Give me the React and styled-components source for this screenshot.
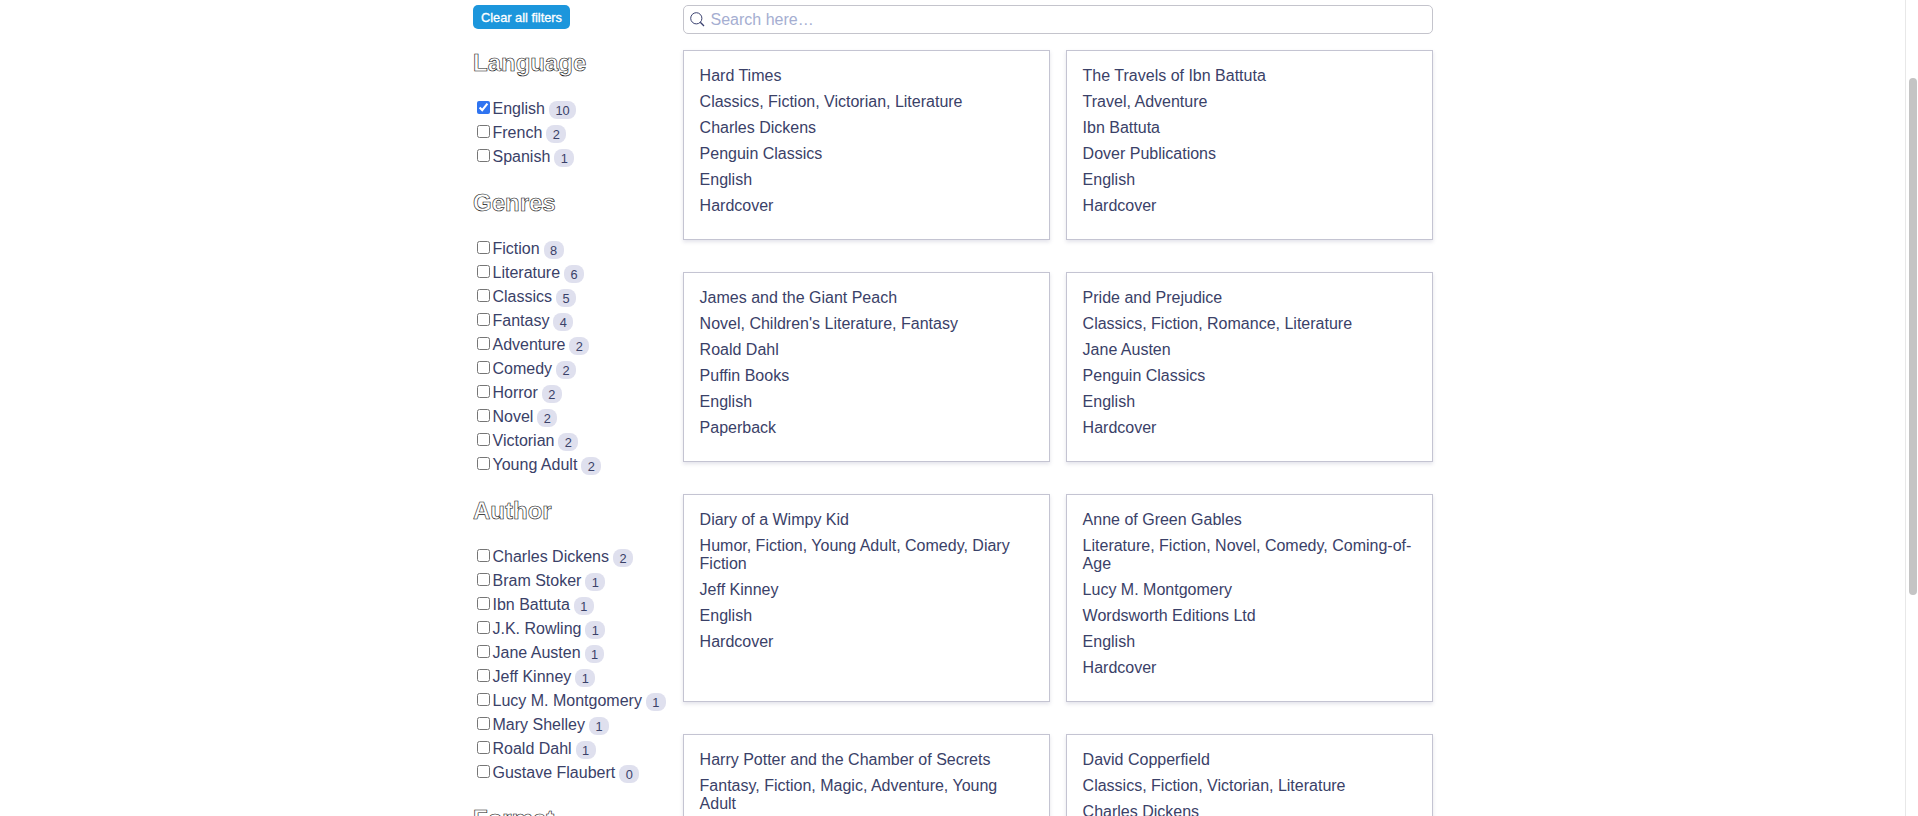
import React from "react";
import styled, { createGlobalStyle } from "styled-components";

const Global = createGlobalStyle`
  *, *::before, *::after { box-sizing: border-box; }
  body {
    margin: 0;
    height: 816px;
    overflow: hidden;
    background: #fff;
    color: #3a4168;
    font-family: "Liberation Sans", Arial, sans-serif;
    font-size: 16px;
    line-height: 18px;
  }
`;

const Page = styled.div`
  display: flex;
  height: 816px;
  overflow: hidden;
`;

const Content = styled.main`
  flex: 1;
  min-width: 0;
  display: flex;
  align-items: flex-start;
  padding: 5px 0 0 473px;
`;

const Sidebar = styled.aside`
  width: 210px;
  flex: none;
`;

const ClearButton = styled.button`
  display: block;
  width: 97px;
  height: 24px;
  margin-bottom: 20px;
  padding: 1px 0 0;
  border: 0;
  border-radius: 5px;
  background: #1c96dc;
  color: #fff;
  font: 12.8px/23px "Liberation Sans", Arial, sans-serif;
  -webkit-text-stroke: 0.3px #fff;
`;

const FacetTitle = styled.h3`
  margin: 0 0 24px;
  font-size: 24px;
  line-height: 28px;
  font-weight: 700;
  color: #fff;
  -webkit-text-stroke: 0.6px #111;
`;

const FacetList = styled.ul`
  list-style: none;
  margin: 0 0 16px;
  padding: 0;
`;

const FacetItem = styled.li`
  height: 24px;
  display: flex;
  align-items: flex-start;
  padding: 0 0 0 4px;
  white-space: nowrap;
`;

const Checkbox = styled.input`
  width: 13px;
  height: 13px;
  margin: 0 2.5px 0 0;
  flex: none;
  accent-color: #2f74f0;
`;

const FacetLabel = styled.label`
  line-height: 16px;
`;

const Count = styled.span`
  margin: 0 0 0 4px;
  height: 18px;
  padding: 0 6.4px;
  border-radius: 8px;
  background: #dfe0ee;
  font-size: 12.8px;
  line-height: 19px;
`;

const Results = styled.section`
  width: 750px;
`;

const SearchBox = styled.div`
  display: flex;
  align-items: center;
  height: 29px;
  padding-left: 6px;
  border: 1px solid #c4c4cc;
  border-radius: 5px;
`;

const SearchIcon = styled.svg`
  width: 15px;
  height: 15px;
  margin-right: 5.5px;
`;

const SearchInput = styled.input`
  flex: 1;
  border: 0;
  padding: 0;
  outline: 0;
  background: transparent;
  font: 16px/18px "Liberation Sans", Arial, sans-serif;
  &::placeholder { color: #a5aed1; opacity: 1; }
`;

const Hits = styled.ol`
  display: grid;
  grid-template-columns: 367px 367px;
  gap: 32px 16px;
  margin: 16px 0 0;
  padding: 0;
  list-style: none;
`;

const Hit = styled.li`
  padding: 16px 16px 16px 15.6px;
  border: 1px solid #c4c4d2;
  background: #fff;
  box-shadow: 0 2px 4px rgba(35, 38, 90, 0.13);
`;

const HitLine = styled.p`
  margin: 0 0 8px;
  line-height: 18px;
`;

const ScrollTrack = styled.div`
  flex: none;
  width: 13px;
  padding: 78px 1px 0 3px;
  border-left: 1px solid #e8e8e8;
`;

const ScrollThumb = styled.div`
  width: 8px;
  height: 517px;
  border-radius: 4px;
  background: #c4c4c4;
`;

const facets = [
  ["Language", [["English", 10, true], ["French", 2], ["Spanish", 1]]],
  ["Genres", [["Fiction", 8], ["Literature", 6], ["Classics", 5], ["Fantasy", 4], ["Adventure", 2], ["Comedy", 2], ["Horror", 2], ["Novel", 2], ["Victorian", 2], ["Young Adult", 2]]],
  ["Author", [["Charles Dickens", 2], ["Bram Stoker", 1], ["Ibn Battuta", 1], ["J.K. Rowling", 1], ["Jane Austen", 1], ["Jeff Kinney", 1], ["Lucy M. Montgomery", 1], ["Mary Shelley", 1], ["Roald Dahl", 1], ["Gustave Flaubert", 0]]],
  ["Format", []],
];

const books = [
  ["Hard Times", "Classics, Fiction, Victorian, Literature", "Charles Dickens", "Penguin Classics", "English", "Hardcover"],
  ["The Travels of Ibn Battuta", "Travel, Adventure", "Ibn Battuta", "Dover Publications", "English", "Hardcover"],
  ["James and the Giant Peach", "Novel, Children's Literature, Fantasy", "Roald Dahl", "Puffin Books", "English", "Paperback"],
  ["Pride and Prejudice", "Classics, Fiction, Romance, Literature", "Jane Austen", "Penguin Classics", "English", "Hardcover"],
  ["Diary of a Wimpy Kid", "Humor, Fiction, Young Adult, Comedy, Diary Fiction", "Jeff Kinney", "English", "Hardcover"],
  ["Anne of Green Gables", "Literature, Fiction, Novel, Comedy, Coming-of-Age", "Lucy M. Montgomery", "Wordsworth Editions Ltd", "English", "Hardcover"],
  ["Harry Potter and the Chamber of Secrets", "Fantasy, Fiction, Magic, Adventure, Young Adult"],
  ["David Copperfield", "Classics, Fiction, Victorian, Literature", "Charles Dickens"],
];

export default function App() {
  return (
    <Page>
      <Global />
      <Content>
        <Sidebar>
          <ClearButton>Clear all filters</ClearButton>
          {facets.map(([title, items]) => (
            <React.Fragment key={title}>
              <FacetTitle>{title}</FacetTitle>
              <FacetList>
                {items.map(([name, count, checked]) => (
                  <FacetItem key={name}>
                    <Checkbox type="checkbox" id={name} defaultChecked={checked} />
                    <FacetLabel htmlFor={name}>{name}</FacetLabel>
                    <Count>{count}</Count>
                  </FacetItem>
                ))}
              </FacetList>
            </React.Fragment>
          ))}
        </Sidebar>
        <Results>
          <SearchBox>
            <SearchIcon viewBox="0 0 15 15" fill="none" stroke="#3a416f" strokeWidth="1">
              <circle cx="6.3" cy="6.3" r="5.6" />
              <path d="M10.3 10.3 L14 14" strokeWidth="1.3" />
            </SearchIcon>
            <SearchInput placeholder="Search here…" />
          </SearchBox>
          <Hits>
            {books.map((lines) => (
              <Hit key={lines[0]}>
                {lines.map((line) => <HitLine key={line}>{line}</HitLine>)}
              </Hit>
            ))}
          </Hits>
        </Results>
      </Content>
      <ScrollTrack><ScrollThumb /></ScrollTrack>
    </Page>
  );
}
